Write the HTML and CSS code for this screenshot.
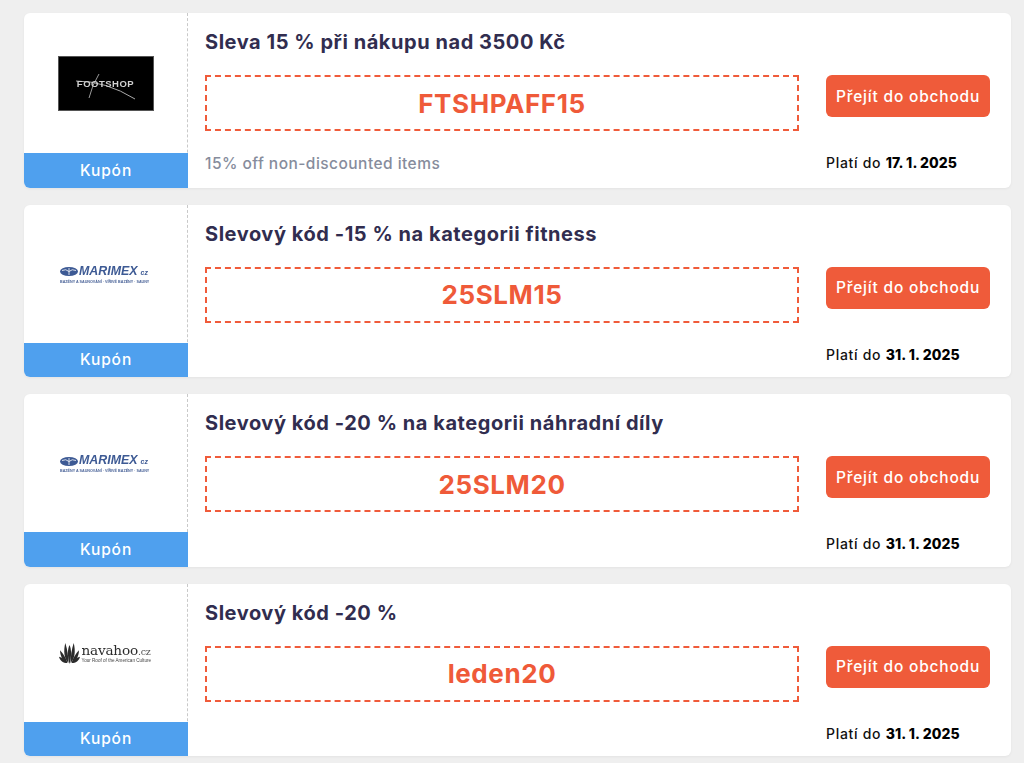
FILE: index.html
```html
<!DOCTYPE html>
<html lang="cs">
<head>
<meta charset="utf-8">
<title>Kupóny</title>
<link rel="stylesheet" href="styles.css">
</head>
<body>
<main class="list">
  <article class="card card-tall">
    <div class="brand">
      <div class="logo-area">
        <div class="logo-footshop">
          <svg class="fs-swoosh" viewBox="0 0 95 54" width="95" height="54"><path d="M17 24 Q47 24 76 42" fill="none" stroke="#aaa" stroke-width="1"/><path d="M30 41 Q33 28 40 17" fill="none" stroke="#999" stroke-width="1"/></svg>
          <span class="fs-text">FOOTSHOP</span>
        </div>
      </div>
      <div class="tag">Kupón</div>
    </div>
    <div class="main">
      <h2 class="title">Sleva 15 % při nákupu nad 3500 Kč</h2>
      <div class="code">FTSHPAFF15</div>
      <a class="btn">Přejít do obchodu</a>
      <p class="desc">15% off non-discounted items</p>
      <p class="valid">Platí do <b>17. 1. 2025</b></p>
    </div>
  </article>

  <article class="card">
    <div class="brand">
      <div class="logo-area">
        <div class="logo-marimex">
          <div class="mx-top">
            <svg class="mx-mark" viewBox="0 0 18 9" width="18" height="9"><ellipse cx="9" cy="4.5" rx="9" ry="4.5" fill="#3d5a94"/><path d="M2 3.5Q6 1.5 9 4.5Q12 1.5 16 3.5M9 1v7" stroke="#fff" stroke-width=".8" fill="none"/></svg>
            <span class="mx-name">MARIMEX<small>cz</small></span>
          </div>
          <span class="mx-sub">BAZÉNY A SAUNOVÁNÍ · VÍŘIVÉ BAZÉNY · SAUNY</span>
        </div>
      </div>
      <div class="tag">Kupón</div>
    </div>
    <div class="main">
      <h2 class="title">Slevový kód -15 % na kategorii fitness</h2>
      <div class="code">25SLM15</div>
      <a class="btn">Přejít do obchodu</a>
      <p class="desc"></p>
      <p class="valid">Platí do <b>31. 1. 2025</b></p>
    </div>
  </article>

  <article class="card">
    <div class="brand">
      <div class="logo-area">
        <div class="logo-marimex">
          <div class="mx-top">
            <svg class="mx-mark" viewBox="0 0 18 9" width="18" height="9"><ellipse cx="9" cy="4.5" rx="9" ry="4.5" fill="#3d5a94"/><path d="M2 3.5Q6 1.5 9 4.5Q12 1.5 16 3.5M9 1v7" stroke="#fff" stroke-width=".8" fill="none"/></svg>
            <span class="mx-name">MARIMEX<small>cz</small></span>
          </div>
          <span class="mx-sub">BAZÉNY A SAUNOVÁNÍ · VÍŘIVÉ BAZÉNY · SAUNY</span>
        </div>
      </div>
      <div class="tag">Kupón</div>
    </div>
    <div class="main">
      <h2 class="title">Slevový kód -20 % na kategorii náhradní díly</h2>
      <div class="code">25SLM20</div>
      <a class="btn">Přejít do obchodu</a>
      <p class="desc"></p>
      <p class="valid">Platí do <b>31. 1. 2025</b></p>
    </div>
  </article>

  <article class="card">
    <div class="brand">
      <div class="logo-area">
        <div class="logo-navahoo">
          <svg class="nv-mark" viewBox="0 0 20 20" width="21" height="21"><g fill="#2b2b2b"><path d="M10 20 C8 13 8 6 10 2 C12 6 12 13 10 20Z"/><path d="M9 19 C5 15 4 8 6 0 C8 6 9 13 9 19Z"/><path d="M11 19 C15 15 16 8 14 0 C12 6 11 13 11 19Z"/><path d="M8 19 C4 17 1 13 1 7 C4 10 7 15 8 19Z"/><path d="M12 19 C16 17 19 13 19 7 C16 10 13 15 12 19Z"/><path d="M8 19 C4 19 1 17 0 13 C4 14 7 16 8 19Z"/><path d="M12 19 C16 19 19 17 20 13 C16 14 13 16 12 19Z"/></g></svg>
          <div class="nv-body"><span class="nv-name">navahoo<small>.cz</small></span><span class="nv-sub">Your Roof of the American Culture</span></div>
        </div>
      </div>
      <div class="tag">Kupón</div>
    </div>
    <div class="main">
      <h2 class="title">Slevový kód -20 %</h2>
      <div class="code">leden20</div>
      <a class="btn">Přejít do obchodu</a>
      <p class="desc"></p>
      <p class="valid">Platí do <b>31. 1. 2025</b></p>
    </div>
  </article>
</main>
</body>
</html>
```
FILE: styles.css
```css
* { box-sizing: border-box; }
html, body { margin: 0; height: 763px; overflow: hidden; }
body { background: #efefef; font-family: Inter, "Open Sans", sans-serif; color: #312d4f; }
.list { display: flex; flex-direction: column; gap: 17px; padding: 13px 13px 0 24px; }
.card { display: flex; height: 172.5px; background: #fff; border-radius: 6px; overflow: hidden; box-shadow: 0 1px 3px rgba(0,0,0,.05); }
.card-tall { height: 174.5px; }
.brand { width: 164px; flex: none; display: flex; flex-direction: column; border-right: 1px dashed #c9c9c9; }
.logo-area { flex: 1; display: flex; align-items: center; justify-content: center; }
.tag { height: 34.5px; margin-right: -1px; background: #4fa0ee; color: #fff; font-size: 15.5px; letter-spacing: .9px; font-weight: 500; display: flex; align-items: center; justify-content: center; }
.main { flex: 1; display: grid; grid-template-columns: 594px 164px; column-gap: 27px; grid-template-rows: 62px 56px 1fr; padding-left: 17px; }
.title { grid-column: 1 / -1; margin: 0; padding-top: 15px; font-size: 20px; line-height: 28px; font-weight: 700; color: #312d4f; letter-spacing: .55px; }
.code { height: 56px; border: 2px dashed #f05b3a; color: #ef5a39; font-size: 26px; font-weight: 700; display: flex; align-items: center; justify-content: center; letter-spacing: .6px; }
.btn { height: 42px; background: #ef5b3a; color: #fff; border-radius: 6px; font-size: 15.5px; letter-spacing: .8px; font-weight: 500; display: flex; align-items: center; justify-content: center; }
.desc { margin: 0; padding-top: 23px; font-size: 15.5px; letter-spacing: .46px; line-height: 20px; color: #868c9c; font-weight: 500; }
.valid { margin: 0; padding-top: 22px; font-size: 14px; letter-spacing: .7px; line-height: 20px; color: #111; font-weight: 500; white-space: nowrap; }
.valid b { font-weight: 800; color: #000; letter-spacing: .1px; }

.logo-footshop { width: 96px; height: 55px; background: #000; border: 1px solid #555; position: relative; display: flex; align-items: center; justify-content: center; }
.fs-swoosh { position: absolute; inset: 0; }
.fs-text { font: 700 9.5px "Liberation Sans", sans-serif; letter-spacing: .5px; color: #d0d0d0; filter: blur(.5px); }

.logo-marimex { display: flex; flex-direction: column; gap: 2px; width: 91px; margin-top: 2px; filter: blur(.4px); }
.mx-top { display: flex; align-items: center; gap: 1px; }
.mx-mark { flex: none; }
.mx-name { font: italic 700 12.4px/10px "Liberation Sans", sans-serif; color: #3d5a94; white-space: nowrap; }
.mx-name small { font-size: 7px; margin-left: 3px; }
.mx-sub { font: 700 3.7px/4px "Liberation Sans", sans-serif; color: #4a6398; white-space: nowrap; }

.logo-navahoo { display: flex; align-items: center; gap: 2px; width: 94px; margin-top: 2px; filter: blur(.35px); }
.nv-mark { flex: none; }
.nv-body { display: flex; flex-direction: column; }
.nv-name { font: 400 13.6px/12px "DejaVu Serif", serif; color: #2b2b2b; white-space: nowrap; letter-spacing: -.2px; }
.nv-name small { font-size: 9.5px; color: #555; }
.nv-sub { font: 4.6px/6px "Liberation Sans", sans-serif; color: #444; white-space: nowrap; }
```
